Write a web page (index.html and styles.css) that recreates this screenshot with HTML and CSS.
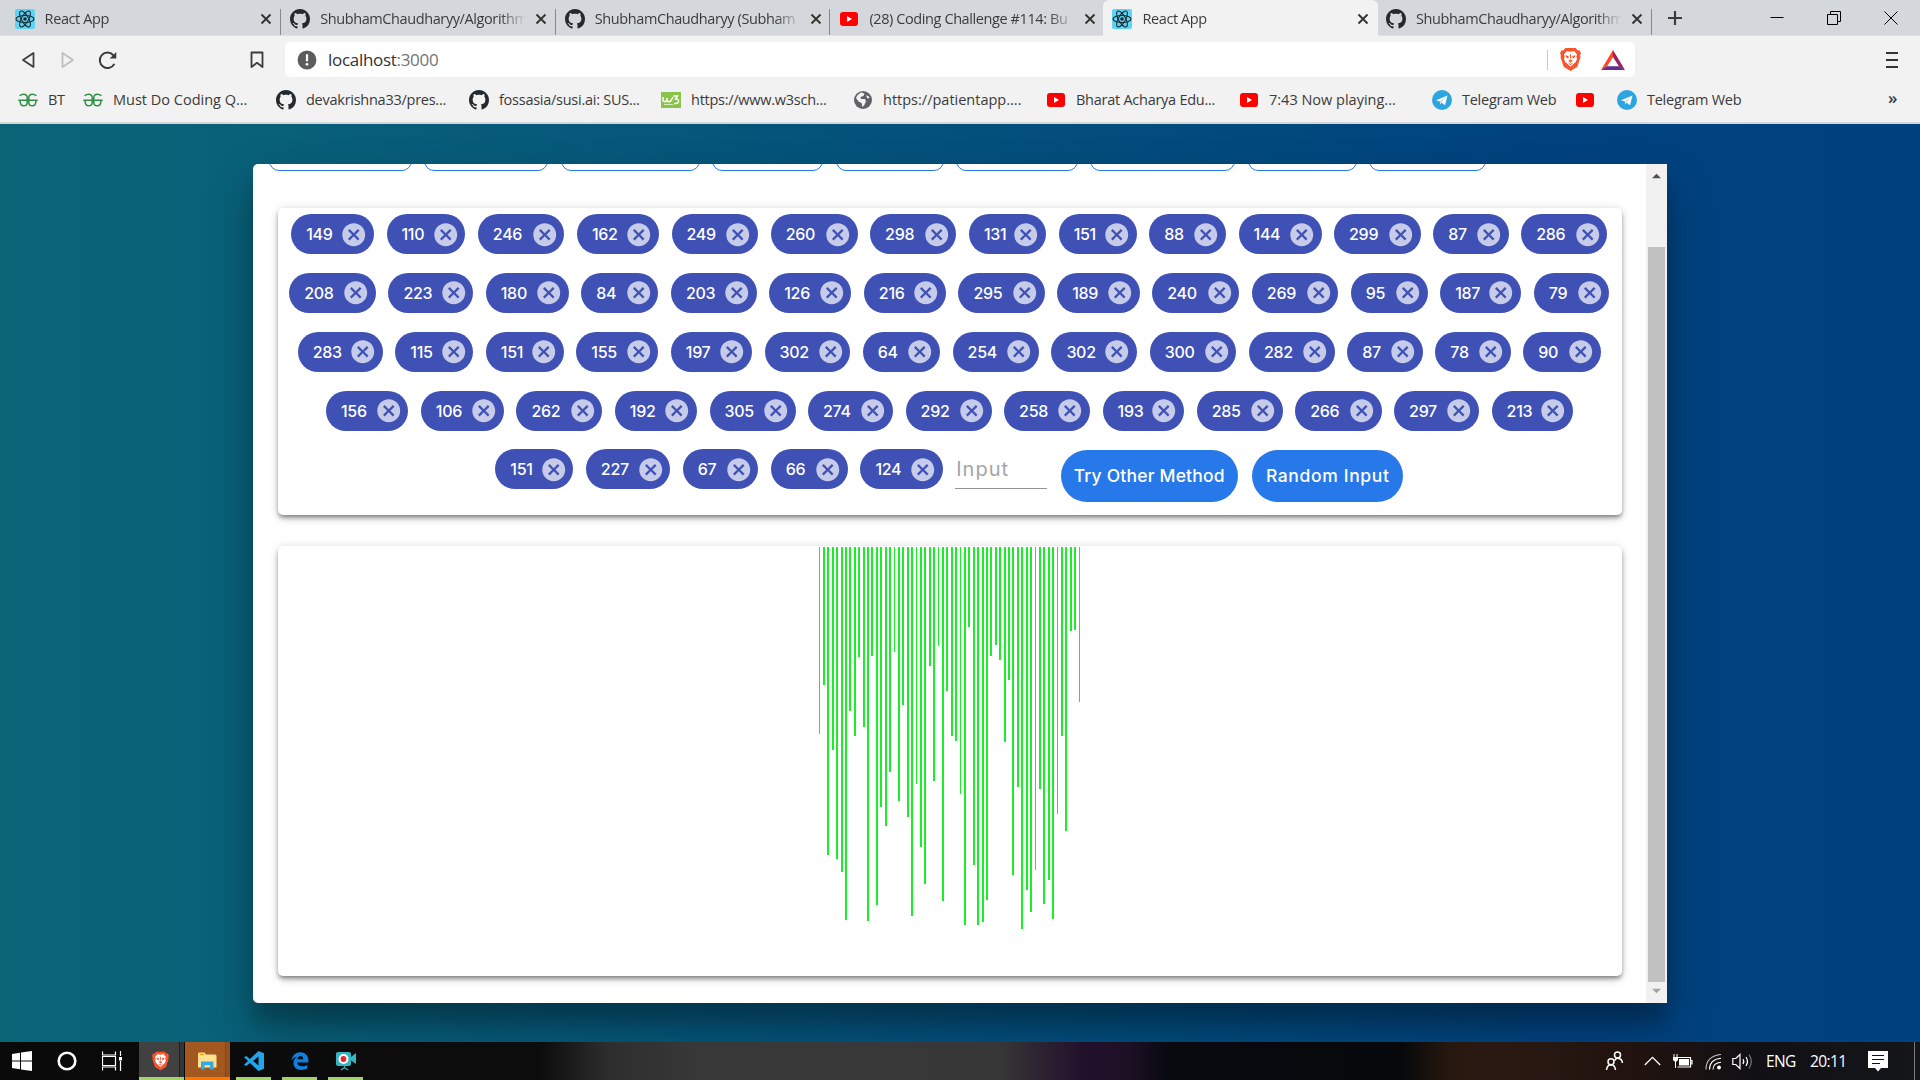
FILE: index.html
```html
<!DOCTYPE html>
<html lang="en">
<head>
<meta charset="utf-8">
<title>React App</title>
<link rel="stylesheet" href="styles.css">
</head>
<body>
<svg class="sprite" aria-hidden="true">
  <symbol id="i-react" viewBox="0 0 20 20"><rect width="20" height="20" rx="2" fill="#5ed3f3"/><g fill="none" stroke="#1c2b33" stroke-width="1.1"><ellipse cx="10" cy="10" rx="9" ry="3.5"/><ellipse cx="10" cy="10" rx="9" ry="3.5" transform="rotate(60 10 10)"/><ellipse cx="10" cy="10" rx="9" ry="3.5" transform="rotate(120 10 10)"/></g><circle cx="10" cy="10" r="1.8" fill="#1c2b33"/></symbol>
  <symbol id="i-github" viewBox="0 0 16 16"><path fill="#24292e" d="M8 0C3.58 0 0 3.58 0 8c0 3.54 2.29 6.53 5.47 7.59.4.07.55-.17.55-.38 0-.19-.01-.82-.01-1.49-2.01.37-2.53-.49-2.69-.94-.09-.23-.48-.94-.82-1.13-.28-.15-.68-.52-.01-.53.63-.01 1.08.58 1.23.82.72 1.21 1.87.87 2.33.66.07-.52.28-.87.51-1.07-1.78-.2-3.64-.89-3.64-3.95 0-.87.31-1.59.82-2.15-.08-.2-.36-1.02.08-2.12 0 0 .67-.21 2.2.82.64-.18 1.32-.27 2-.27s1.36.09 2 .27c1.53-1.04 2.2-.82 2.2-.82.44 1.1.16 1.92.08 2.12.51.56.82 1.27.82 2.15 0 3.07-1.87 3.75-3.65 3.95.29.25.54.73.54 1.48 0 1.07-.01 1.93-.01 2.2 0 .21.15.46.55.38A8.01 8.01 0 0 0 16 8c0-4.42-3.58-8-8-8z"/></symbol>
  <symbol id="i-youtube" viewBox="0 0 20 20"><rect x="1" y="3" width="18" height="14" rx="3" fill="#f00"/><path d="M8 7l5 3-5 3z" fill="#fff"/></symbol>
  <symbol id="i-telegram" viewBox="0 0 20 20"><circle cx="10" cy="10" r="10" fill="#2ca5e0"/><path d="M4 10.2L15.500 5.400 13 15.200 9.700 12.700 8 14.300 7.900 11.400z" fill="#fff"/><path d="M7.900 11.500L13.500 7.300 9.700 12.600 8.100 14.200z" fill="#c8daea"/></symbol>
  <symbol id="i-close" viewBox="0 0 12 12"><path d="M1.500 1.500l9 9M10.500 1.500l-9 9" stroke="#333" stroke-width="1.900" fill="none"/></symbol>
  <symbol id="i-geeks" viewBox="0 0 20 14"><g fill="none" stroke="#2f8d46" stroke-width="1.500"><path d="M.3 7.300H9.200V4.500C9.200 2.400 7.500 1.200 5.700 1.200 4 1.200 2.600 1.800 1.600 2.800M9.200 7.300V9.500C9.200 11.600 7.700 12.800 5.600 12.800 3.500 12.800 2 11 2 7.500"/><path d="M19.700 7.300H10.800V4.500C10.800 2.400 12.500 1.200 14.300 1.200 16 1.200 17.400 1.800 18.400 2.800M10.800 7.300V9.500C10.800 11.600 12.300 12.800 14.400 12.800 16.500 12.800 18 11 18 7.500"/></g></symbol>
  <symbol id="i-brave" viewBox="0 0 20 22"><path d="M5 0h10l2 2.400 1.600-.3L20 5l-.8 1.600.3 2.400-3 9L10 22l-6.500-4L.5 9l.3-2.400L0 5l1.400-2.900 1.600.3z" fill="#fb542b"/><path d="M10 3.600l3.500-.7 2.700 3-.7 3 .9 1.200-1.400 3.400L13 15l-3 3-3-3-2-1.500-1.400-3.400.9-1.200-.7-3 2.700-3z" fill="#fff"/><path d="M5.200 7l3 .7-.3 2.600-2-1.400zM14.800 7l-3 .7.300 2.600 2-1.400zM10 11l2 1.200L10 14l-2-1.800zM9.500 6h1v4h-1zM7 13.500l3 1.700 3-1.700-3 3z" fill="#fb542b"/></symbol>
  <symbol id="i-cancel" viewBox="0 0 24 24"><path d="M12 2C6.470 2 2 6.470 2 12s4.470 10 10 10 10-4.470 10-10S17.530 2 12 2zm5 13.590L15.590 17 12 13.410 8.410 17 7 15.590 10.590 12 7 8.410 8.410 7 12 10.590 15.590 7 17 8.410 13.410 12 17 15.590z" fill="currentColor"/></symbol>
</svg>

<header class="browser">
  <nav class="tabs">
    <div class="tab first"><svg class="fav"><use href="#i-react"/></svg><span class="tab-title">React App</span><svg class="x"><use href="#i-close"/></svg></div>
    <div class="tab"><svg class="fav"><use href="#i-github"/></svg><span class="tab-title">ShubhamChaudharyy/Algorithm</span><svg class="x"><use href="#i-close"/></svg></div>
    <div class="tab"><svg class="fav"><use href="#i-github"/></svg><span class="tab-title">ShubhamChaudharyy (Subham</span><svg class="x"><use href="#i-close"/></svg></div>
    <div class="tab last"><svg class="fav"><use href="#i-youtube"/></svg><span class="tab-title">(28) Coding Challenge #114: Bu</span><svg class="x"><use href="#i-close"/></svg></div>
    <div class="tab active"><svg class="fav"><use href="#i-react"/></svg><span class="tab-title">React App</span><svg class="x"><use href="#i-close"/></svg></div>
    <div class="tab"><svg class="fav"><use href="#i-github"/></svg><span class="tab-title">ShubhamChaudharyy/Algorithm</span><svg class="x"><use href="#i-close"/></svg></div>
    <svg class="plus" viewBox="0 0 16 16"><path d="M8 1v14M1 8h14" stroke="#3b3b3b" stroke-width="2.200"/></svg>
    <div class="window-buttons">
      <svg viewBox="0 0 14 14"><path d="M.5 6.500h13" stroke="#000" stroke-width="1"/></svg>
      <svg viewBox="0 0 14 14"><path d="M.5 3.500h10v10h-10zM3.500 3.500v-3h10v10h-3" stroke="#000" fill="none"/></svg>
      <svg viewBox="0 0 14 14"><path d="M.5.500l13 13M13.500.500l-13 13" stroke="#000" fill="none"/></svg>
    </div>
  </nav>
  <div class="toolbar">
    <svg class="back" viewBox="0 0 14 18"><path d="M12.500 2v14L2 9z" fill="none" stroke="#3b3b3b" stroke-width="1.700" stroke-linejoin="round"/></svg>
    <svg class="forward" viewBox="0 0 14 18"><path d="M1.500 2v14L12 9z" fill="none" stroke="#bdbdbd" stroke-width="1.700" stroke-linejoin="round"/></svg>
    <svg class="reload" viewBox="0 0 18 18"><path d="M14.500 4A7.300 7.300 0 1 0 15.500 12.200" fill="none" stroke="#3b3b3b" stroke-width="1.900"/><path d="M17.300 1v6.200h-6.200z" fill="#3b3b3b"/></svg>
    <svg class="mark" viewBox="0 0 14 18"><path d="M1.500 1.500h11v14.500L7 11.800 1.500 16z" fill="none" stroke="#3b3b3b" stroke-width="1.800" stroke-linejoin="round"/></svg>
    <div class="address">
      <svg class="info" viewBox="0 0 20 20"><circle cx="10" cy="10" r="9.400" fill="#5c5c5c"/><path d="M10 4.300v7" stroke="#fff" stroke-width="2.200"/><circle cx="10" cy="14.300" r="1.400" fill="#fff"/></svg>
      <span class="url">localhost<span class="port">:3000</span></span>
      <span class="divider"></span>
      <svg class="brave"><use href="#i-brave"/></svg>
      <svg class="bat" viewBox="0 0 24 20"><path d="M12 0L0 20l6-3.500L12 7z" fill="#ff4724"/><path d="M12 0l12 20-6-3.500L12 7z" fill="#9e1f63"/><path d="M0 20h24l-6-3.800H6z" fill="#662d91"/></svg>
    </div>
    <svg class="menu" viewBox="0 0 12 18"><path d="M0 2h12M0 9h12M0 16h12" stroke="#333" stroke-width="1.800"/></svg>
  </div>
  <nav class="bookmarks">
    <a><svg class="geeks"><use href="#i-geeks"/></svg><span>BT</span></a>
    <a><svg class="geeks"><use href="#i-geeks"/></svg><span class="loose">Must Do Coding Q...</span></a>
    <a><svg><use href="#i-github"/></svg><span>devakrishna33/pres...</span></a>
    <a><svg><use href="#i-github"/></svg><span>fossasia/susi.ai: SUS...</span></a>
    <a><svg viewBox="0 0 20 20"><rect y="2" width="20" height="16" fill="#8bc34a"/><path d="M2 7v3.500q2 2.500 4 0V8v2.500q2 2.500 4 0L12 7M12.500 6h4l-2 2.800q3.300.2 3 2.800-.6 2.600-4.500 1.800" fill="none" stroke="#fff" stroke-width="1.500"/><path d="M3 14.500h9" stroke="#d7ecbb"/></svg><span>https://www.w3sch...</span></a>
    <a><svg viewBox="0 0 20 20"><circle cx="10" cy="10" r="9" fill="#5f6368"/><path d="M3 8q2-5 6-5.500l2.500 1.200-1 2.300-3 1 .5 2h4l1 2.500-2 4-1.500 1.500-1-4-3-1.500zM13 5.500l2.500.5 1 2-2 .5z" fill="#f2f2f2"/></svg><span class="loose">https://patientapp....</span></a>
    <a><svg><use href="#i-youtube"/></svg><span>Bharat Acharya Edu...</span></a>
    <a><svg><use href="#i-youtube"/></svg><span class="loose">7:43 Now playing...</span></a>
    <a><svg><use href="#i-telegram"/></svg><span>Telegram Web</span></a>
    <a><svg><use href="#i-youtube"/></svg></a>
    <a><svg><use href="#i-telegram"/></svg><span>Telegram Web</span></a>
    <span class="more">»</span>
  </nav>
</header>

<main class="page">
  <section class="window">
    <div class="content">
      <div class="algorithms" id="algorithms"></div>
      <div class="card inputs">
        <div id="chips" class="chip-rows"></div>
      </div>
      <div class="card chart" id="bars"></div>
    </div>
    <div class="scrollbar">
      <svg viewBox="0 0 10 6"><path d="M0 5.500L5 .5l5 5z" fill="#505050"/></svg>
      <div class="thumb"></div>
      <svg viewBox="0 0 10 6"><path d="M0 .5h10l-5 5z" fill="#a3a3a3"/></svg>
    </div>
  </section>
</main>

<footer class="taskbar">
  <div class="cell"><svg width="20" height="20" viewBox="0 0 20 20"><path d="M0 3l8-1.200V9.500H0zM9 1.600L20 0v9.500H9zM0 10.500h8v7.700L0 17zM9 10.500h11V20L9 18.400z" fill="#fff"/></svg></div>
  <div class="cell"><svg width="20" height="20" viewBox="0 0 20 20"><circle cx="10" cy="10" r="8.300" fill="none" stroke="#fff" stroke-width="2.600"/></svg></div>
  <div class="cell"><svg width="21" height="20" viewBox="0 0 21 20"><path d="M.5.500v3.500h13V.500M.5 19.500V16h13v3.500M.5 5.500h13v9H.5zM18.500 0v5M18.500 10v10" fill="none" stroke="#fff" stroke-width="1.200"/><path d="M17 6h3v3.500h-3z" fill="#fff"/></svg></div>
  <div class="cell app current"><svg width="17" height="20"><use href="#i-brave"/></svg></div>
  <div class="cell app alert"><svg width="19" height="18" viewBox="0 0 19 18"><path d="M0 2q0-1.500 1.500-1.500h5L8 2.500h9q1.500 0 1.500 1.500v11.500H0z" fill="#ffe28f"/><path d="M2 2.500h4" stroke="#e8a800" stroke-width="1.400"/><path d="M3 17.500v-8h12.500v8H12v-4.300H6.500v4.300z" fill="#35a8e6"/></svg></div>
  <div class="cell app"><svg width="20" height="20" viewBox="0 0 20 20"><path d="M14.500 0L20 2.300v15.400L14.500 20 6 12l-3.800 3L0 13.800 4 10 0 6.200 2.200 5 6 8zM14.500 5.500L9 10l5.500 4.500z" fill="#23a4ea"/></svg></div>
  <div class="cell app"><svg width="18" height="18" viewBox="0 0 18 18"><path d="M.5 8.500C1.500 3 5 .3 9.200.3c5 0 8.200 3.500 8.200 8.200v2H6.200c.2 2.700 2.300 3.800 4.800 3.800 2 0 3.800-.5 5.300-1.400v3.700c-1.700.9-3.700 1.300-6 1.300-5 0-7.800-3-7.800-7 0-2.700 1.300-4.900 3.600-6.200C3.500 5.200 1.700 6.500.5 8.500zM6.300 7.300h6c0-2-1-3.300-2.900-3.300-1.700 0-2.800 1.400-3.100 3.300z" fill="#0f7fe0"/></svg></div>
  <div class="cell app"><svg width="20" height="20" viewBox="0 0 20 20"><rect width="15" height="14" y="1" rx="2" fill="#35b5c1"/><path d="M15 6l5-4v11l-5-3.500z" fill="#35b5c1"/><circle cx="7.500" cy="8" r="5" fill="#fff"/><circle cx="7.500" cy="8" r="2.900" fill="#e8262c"/><path d="M8.500 15v2.500M5 19l3.500-2.500L12 19" stroke="#35b5c1" fill="none" stroke-width="1.200"/></svg></div>
  <div class="tray">
    <svg width="20" height="20" viewBox="0 0 20 20"><g fill="none" stroke="#fff" stroke-width="1.500"><circle cx="12.500" cy="4" r="3"/><circle cx="6" cy="10.800" r="3"/><path d="M9.500 9.500Q11 7 13 7.300 17 7.800 17.500 12M1.500 19q.5-5 4.500-5.200Q10 14 10.500 19"/></g></svg>
    <svg width="17" height="10" viewBox="0 0 17 10"><path d="M.8 9l7.700-7.700L16.200 9" fill="none" stroke="#fff" stroke-width="1.300"/></svg>
    <svg width="21" height="15" viewBox="0 0 21 15"><path d="M5.500 3.500h13v9.500h-13M18.500 6.500h1.500v3.500h-1.500" fill="none" stroke="#fff" stroke-width="1.200"/><path d="M7 5h10v6.500H7zM1 3h5v3L4.500 7.500h-2L1 6z" fill="#fff"/><path d="M2 0v3M5 0v3M3.500 7v7" stroke="#fff"/></svg>
    <svg width="17" height="17" viewBox="0 0 17 17"><g fill="none" stroke="#fff" stroke-width="1.100"><path d="M1 16.500Q1 3 16 1.500" opacity=".75"/><path d="M4.500 16.500Q4.500 6.500 16 5.300"/><path d="M8 16.500Q8 9.800 16 9.200"/></g><circle cx="14" cy="14.500" r="1.900" fill="#fff"/></svg>
    <svg width="21" height="17" viewBox="0 0 21 17"><path d="M.8 5.500h3L8 1.500v14L3.800 11.500h-3z" fill="none" stroke="#fff" stroke-width="1.200"/><path d="M11 6q1.500 2.500 0 5M14 4q3 4.500 0 9" fill="none" stroke="#fff" stroke-width="1.200"/><path d="M17 1.500q4.500 7 0 14" fill="none" stroke="#777" stroke-width="1.200"/></svg>
    <span class="lang">ENG</span>
    <span class="clock">20:11</span>
    <svg width="21" height="21" viewBox="0 0 21 21"><path d="M0 0h20v17h-7l-3 3.500L7 17H0z" fill="#fff"/><path d="M4 4.500h12M4 8.500h12M4 12.500h8" stroke="#111" stroke-width="1.200"/></svg>
    <i class="edge"></i>
  </div>
</footer>
<script src="script.js"></script>
</body>
</html>
```
FILE: styles.css
```css
* { box-sizing: border-box; }
body { margin: 0; width: 1920px; height: 1080px; overflow: hidden; display: flex; flex-direction: column; font-family: "Open Sans", sans-serif; color: #3b3b3b; }
svg { display: block; flex: none; }
.sprite { position: absolute; width: 0; height: 0; }

.browser { height: 124px; background: #f2f2f2; border-bottom: 2px solid #d3d6da; flex: none; }
.tabs { height: 36px; display: flex; background: #d4d8dc; border-bottom: 1px solid #dfe1e3; align-items: center; padding-left: 6.600px; }
.tab { width: 274.600px; height: 35px; display: flex; align-items: center; padding: 2px 8px 0 9px; position: relative; flex: none; }
.tab.first { padding-left: 8px; }
.tab::after { content: ""; width: 1px; height: 26px; background: #85898d; position: absolute; right: 0; bottom: 0; }
.tab.last::after, .tab.active::after { display: none; }
.tab.active { background: #f2f2f2; border-radius: 6px 6px 0 0; height: 36px; margin: 0 -1px -1px -1.500px; }
.fav { width: 20px; height: 20px; margin-right: 10px; }
.tab-title { width: 205px; overflow: hidden; white-space: nowrap; font-size: 14.500px; letter-spacing: -.4px; line-height: 22px; -webkit-mask-image: linear-gradient(90deg, #000 180px, transparent 206px); mask-image: linear-gradient(90deg, #000 180px, transparent 206px); }
.x { width: 12px; height: 12px; margin-left: 10px; }
.plus { width: 16px; height: 16px; margin-left: 15px; }
.window-buttons { margin-left: auto; display: flex; gap: 43px; padding-right: 22px; }
.window-buttons svg { width: 14px; height: 14px; }

.toolbar { height: 48px; display: flex; align-items: center; padding-left: 21px; }
.back { width: 14px; height: 18px; margin-right: 26px; }
.forward { width: 14px; height: 18px; margin-right: 23px; }
.reload { width: 19px; height: 19px; margin-right: 133px; }
.mark { width: 14px; height: 18px; margin-right: 21px; }
.address { width: 1350px; height: 35px; background: #fff; border-radius: 5px; display: flex; align-items: center; padding: 0 10px 0 12px; margin-top: -1px; }
.info { width: 20px; height: 20px; margin-right: 11px; }
.url { font-size: 17px; letter-spacing: -.3px; flex: 1; color: #333; margin-top: -1px; }
.port { color: #737373; }
.divider { width: 1px; height: 20px; background: #c8c8c8; margin-right: 12px; }
.brave { width: 21px; height: 23px; margin-right: 20px; }
.bat { width: 24px; height: 20px; }
.menu { width: 12px; height: 18px; margin-left: auto; margin-right: 22px; }

.bookmarks { height: 32px; display: grid; align-items: center; padding-left: 18px; grid-template-columns: 65px 193px 193px 192px 192px 193px 193px 193px 143px 42px 271px 1fr; }
.bookmarks a { display: flex; align-items: center; gap: 10px; font-size: 14.500px; letter-spacing: -.26px; white-space: nowrap; }
.bookmarks .loose { letter-spacing: 0; }
.bookmarks span { margin-top: -1px; }
.bookmarks svg { width: 20px; height: 20px; }
.bookmarks .geeks { height: 14px; }
.bookmarks .more { font-size: 17px; margin-top: -5px; font-weight: 600; }

.page { flex: 1; background: linear-gradient(90deg, #0a6677 0%, #00437f 80%, #00427f 100%); display: flex; padding: 40px 253px 39px; }
.window { width: 1414px; height: 839px; background: #fff; border-radius: 5px 0 0 5px; box-shadow: 0 24px 48px rgba(0,0,0,.3), 0 19px 15px rgba(0,0,0,.13); display: flex; overflow: hidden; }
.content { width: 1393px; padding: 0 24px 0 25px; overflow: hidden; }
.algorithms { display: flex; gap: 12.400px; margin-left: -9px; height: 44px; align-items: flex-start; }
.algorithms div { height: 50px; margin-top: -43px; border: 1px solid #2779ea; border-radius: 10px; flex: none; }
.card { width: 1344px; border-radius: 5px; background: #fff; box-shadow: 0 0 10px rgba(0,0,0,.12), 0 3px 4px -1px rgba(0,0,0,.4), 0 5px 8px -1px rgba(0,0,0,.16); }
.inputs { height: 307px; padding: 6.300px 1.400px 0 0; margin-bottom: 31px; }
.chip-rows { display: flex; flex-direction: column; gap: 18.750px; font-family: Inter, sans-serif; }
.row { display: flex; justify-content: center; gap: 12.500px; height: 40px; }
.chip { height: 40px; border-radius: 20px; background: #3f51b5; display: flex; align-items: center; padding: 0 6.250px 0 15px; justify-content: space-between; color: #fff; font-size: 16px; font-weight: 500; flex: none; }
.chip .label { letter-spacing: -.3px; }
.chip svg { width: 27.500px; height: 27.500px; color: rgba(255,255,255,.7); }
.field { width: 92px; height: 40px; border-bottom: 1px solid #949494; color: #a5a5a5; font-size: 20px; line-height: 41px; padding-left: 1px; letter-spacing: 1px; }
.pill { height: 52px; border-radius: 26px; background: #2779ea; color: #fff; font-size: 17.500px; font-weight: 500; margin-top: 1px; line-height: 52px; text-align: center; flex: none; white-space: nowrap; }
.pill.other { width: 177px; margin-left: 1px; letter-spacing: .2px; }
.pill.random { width: 151px; margin-left: 2px; letter-spacing: .65px; }
.chart { height: 430px; padding: 1.300px 0 0 540.610px; display: flex; gap: 2.53125px; align-items: flex-start; }
.bar { width: 1.875px; background: #19ee28; flex: none; }
.scrollbar { width: 21px; background: #f1f1f1; display: flex; flex-direction: column; align-items: center; padding: 9px 1px 9px 0; }
.scrollbar svg { width: 9px; height: 6px; }
.thumb { width: 17px; height: 735px; background: #c1c1c1; margin: 68px 0 6px; }

.taskbar { height: 38px; flex: none; display: flex; align-items: stretch; background: linear-gradient(90deg, #0a0a0a 0, #0c0c0c 540px, #2e2e2e 610px, #383838 700px, #373737 1000px, #2b2130 1045px, #220f2c 1085px, #1c1024 1130px, #08090f 1170px, #06080b 1400px, #27180f 1450px, #2a1913 1500px, #22130e 1620px, #111015 1760px, #14161a 1920px); }
.cell { width: 45px; display: flex; align-items: center; justify-content: center; }
.cell:first-child { width: 44px; }
.cell:nth-child(3) { width: 50px; padding-right: 4px; }
.app { width: 35px; border-bottom: 3px solid #a0d468; margin: 0 5.500px; padding-top: 2px; }
.app.current { width: 45px; margin: 0 1px 0 0; background: linear-gradient(90deg, #414141 40px, #1e1e1e 40px, #1e1e1e 41px, #353535 41px); }
.app.current svg { margin-right: 3px; }
.app.alert { width: 45px; margin: 0 .5px 0 0; background: linear-gradient(90deg, #a3581f 40px, #844719 40px, #844719 41px, #955220 41px); border-color: #ff7300; }
.tray { margin-left: auto; width: 315px; display: grid; align-items: center; grid-template-columns: 39px 28px 33px 27px 34px 44px 58px 46px 6px; color: #fff; font-size: 15.500px; letter-spacing: -.6px; }
.edge { width: 1px; height: 38px; background: #77797c; }
```
FILE: script.js
```js
// Values shown as chips; the same list is drawn as bars.
const rows = [
  [149, 110, 246, 162, 249, 260, 298, 131, 151, 88, 144, 299, 87, 286],
  [208, 223, 180, 84, 203, 126, 216, 295, 189, 240, 269, 95, 187, 79],
  [283, 115, 151, 155, 197, 302, 64, 254, 302, 300, 282, 87, 78, 90],
  [156, 106, 262, 192, 305, 274, 292, 258, 193, 285, 266, 297, 213],
  [151, 227, 67, 66, 124]
];
// Width of each digit in a chip label, 0 to 9.
const digitWidth = [10.3, 5.5, 9.3, 8.7, 10, 9.5, 9.8, 8.3, 9.7, 9.9];
const chipWidth = v => 57.5 + [...String(v)].reduce((sum, d) => sum + digitWidth[d], 0);
const chip = v => `<div class="chip" style="width:${chipWidth(v)}px"><span class="label">${v}</span><svg><use href="#i-cancel"/></svg></div>`;
const controls = '<div class="field">Input</div><div class="pill other">Try Other Method</div><div class="pill random">Random Input</div>';
document.getElementById('chips').innerHTML = rows
  .map((r, i) => `<div class="row">${r.map(chip).join('')}${i === rows.length - 1 ? controls : ''}</div>`)
  .join('');

document.getElementById('bars').innerHTML = rows.flat()
  .map(v => `<div class="bar" style="height:${v * 1.25}px"></div>`)
  .join('');

const buttonWidths = [143, 124, 139, 111, 108, 122, 145, 109, 117];
document.getElementById('algorithms').innerHTML = buttonWidths.map(w => `<div style="width:${w}px"></div>`).join('');
```
